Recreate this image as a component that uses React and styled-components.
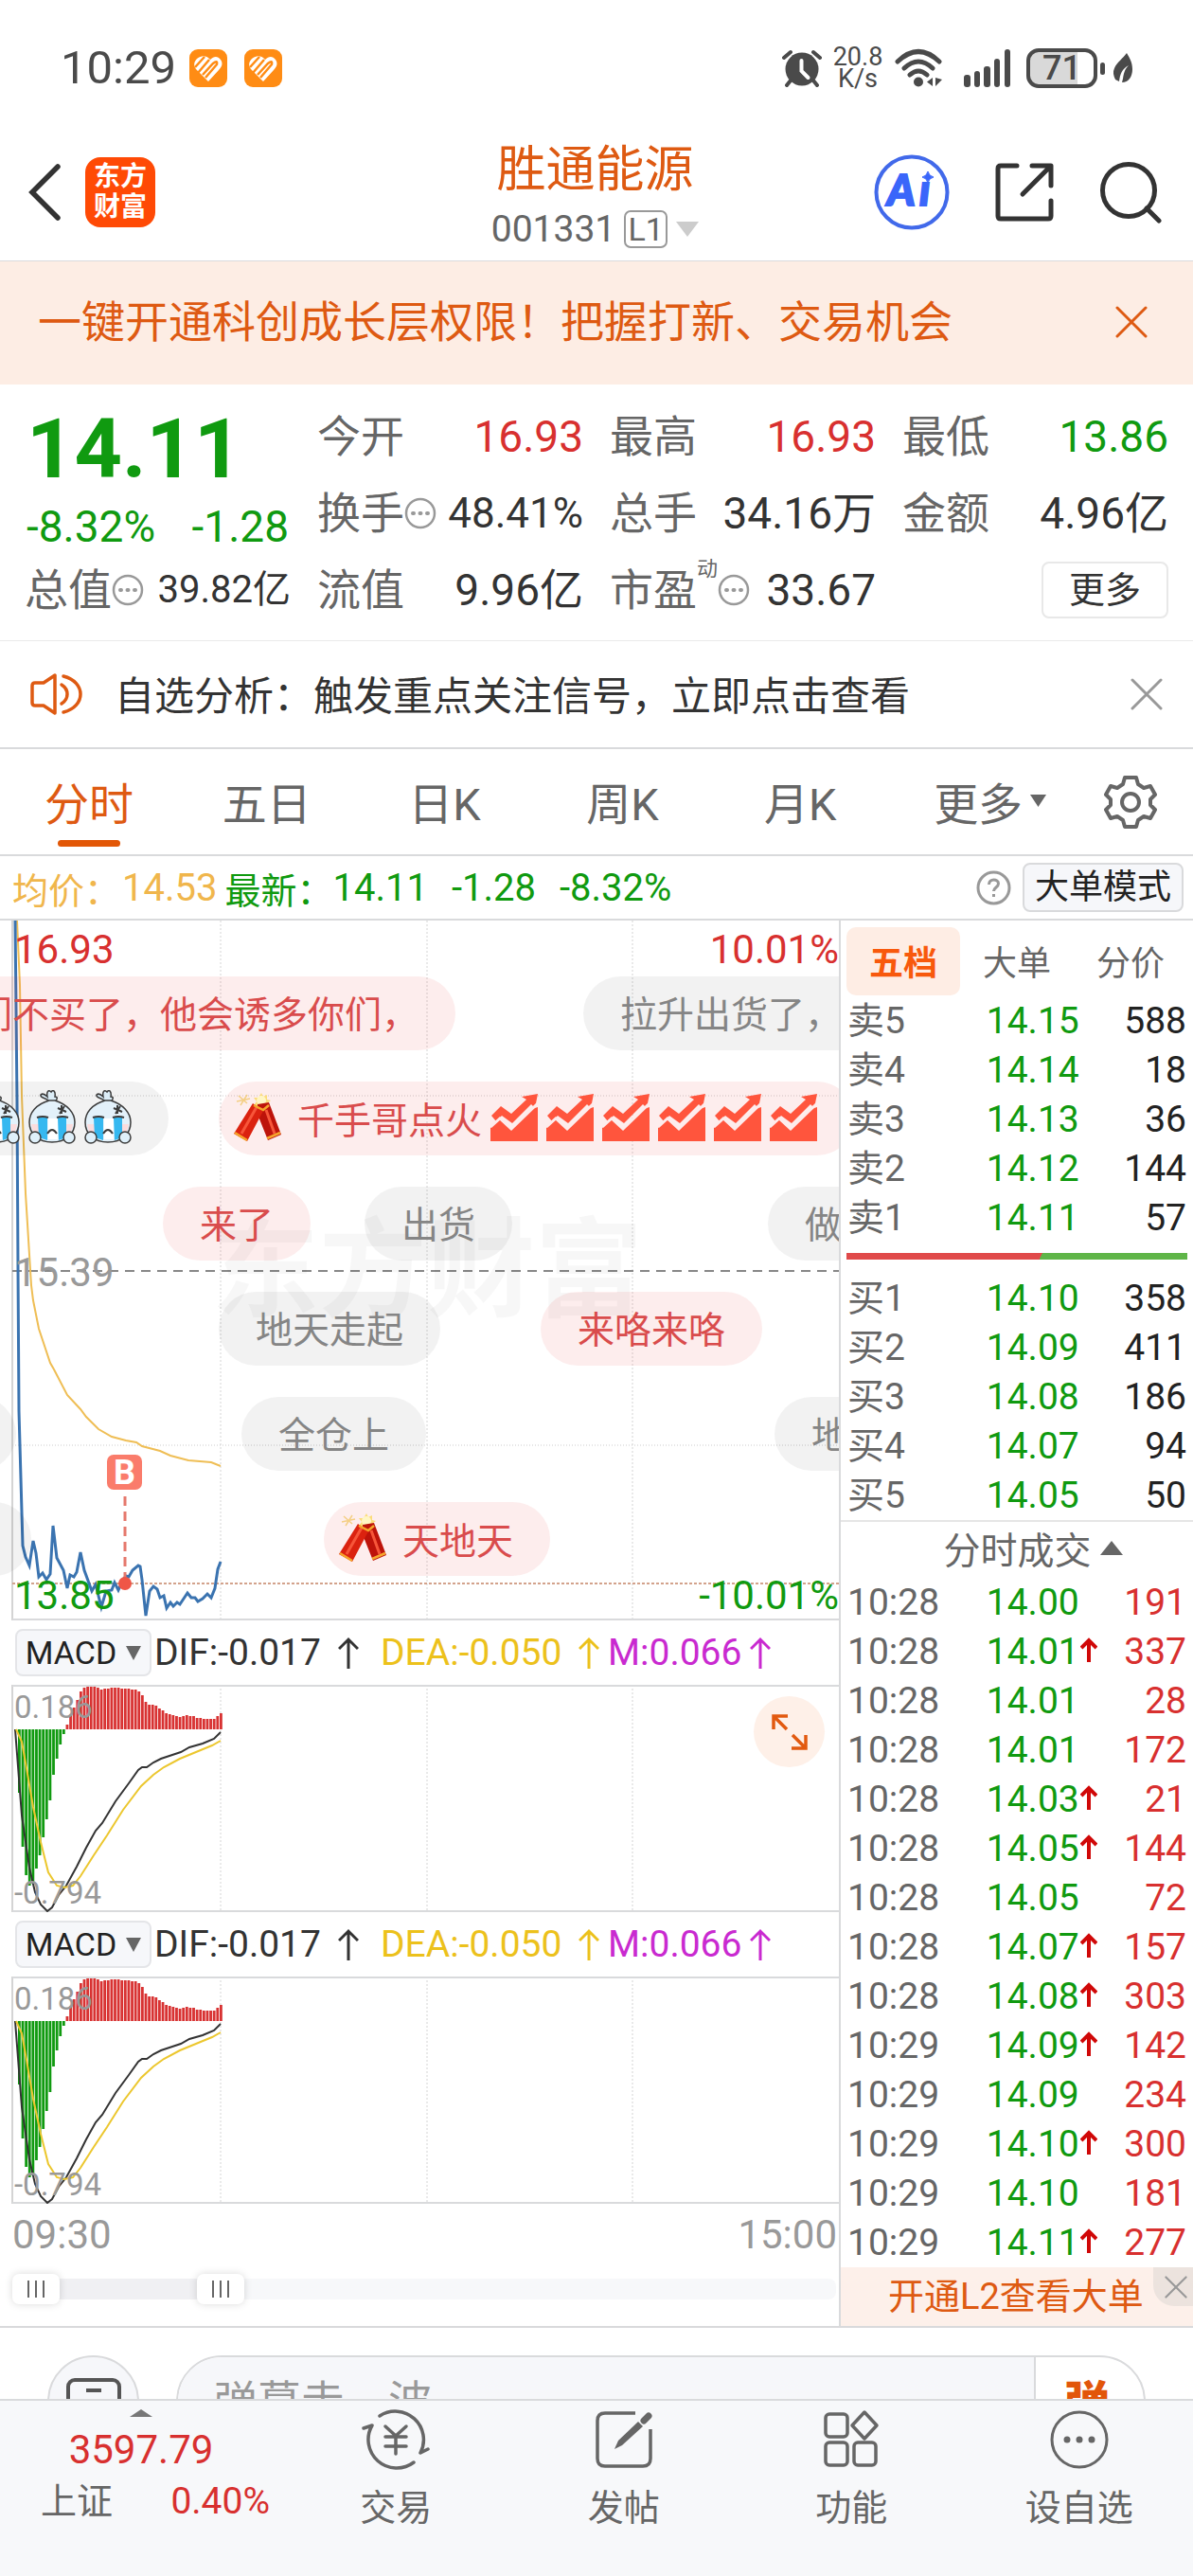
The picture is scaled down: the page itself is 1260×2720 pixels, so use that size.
import React, { useState } from "react";
import styled, { createGlobalStyle } from "styled-components";

const GlobalStyle = createGlobalStyle`
  * {
    box-sizing: border-box;
  }

  body {
    margin: 0;
    background: #fff;
    color: #333;
    font-family: Roboto, "Noto Sans CJK SC", sans-serif;
    font-size: 38px;
  }

  button {
    padding: 0;
    border: none;
    background: none;
    color: inherit;
    font: inherit;
    cursor: pointer;
  }

  svg {
    display: block;
    flex: none;
  }
`;

const colors = {
  accent: "#de5a12",
  up: "#d8302f",
  down: "#109a10",
  text: "#333",
  label: "#666",
  muted: "#999",
  line: "#d9dadc",
  average: "#f0b64c",
};

// Page Layout
const Page = styled.div`
  display: flex;
  flex-direction: column;
  height: 100vh;
`;

const Content = styled.main`
  flex: 1;
  min-height: 0;
  overflow-y: auto;
  scrollbar-width: none;
`;

// Status Bar
const StatusBar = styled.div`
  display: flex;
  align-items: center;
  height: 144px;
  padding: 0 64px;
  color: #4a4a4a;
`;

const Clock = styled.span`
  margin-right: 14px;
  font-size: 49px;
  line-height: 56px;
`;

const AppBadges = styled.div`
  display: flex;
  flex: 1;
  gap: 18px;
`;

const StatusIcons = styled.div`
  display: flex;
  align-items: center;
`;

const NetSpeed = styled.span`
  width: 54px;
  margin: 0 12px 0 11px;
  font-size: 27px;
  line-height: 23px;
  text-align: center;
`;

const Signal = styled.span`
  margin-left: 23px;
`;

const Battery = styled.span`
  width: 75px;
  height: 42px;
  margin: 0 3px 0 16px;
  border: 4px solid #4a4a4a;
  border-radius: 13px;
  background: linear-gradient(90deg, #d9d9d9 74%, #fff 74%);
  font-size: 36px;
  font-weight: 500;
  line-height: 35px;
  text-align: center;
`;

// Header
const Header = styled.header`
  display: grid;
  grid-template-columns: 1fr auto 1fr;
  align-items: center;
  height: 132px;
  padding: 0 33px 0 30px;
  border-bottom: 1px solid ${colors.line};
`;

const HeaderSide = styled.div`
  display: flex;
  align-items: center;
  justify-content: ${(props) => (props.$end ? "flex-end" : "flex-start")};
  gap: ${(props) => (props.$end ? "48px" : "26px")};
  padding-bottom: 14px;
`;

const Logo = styled.div`
  display: flex;
  align-items: center;
  justify-content: center;
  width: 74px;
  height: 74px;
  border-radius: 16px;
  background: #ff4a05;
  color: #fff;
  font-size: 28px;
  font-weight: 700;
  line-height: 32px;
  text-align: center;
`;

const Heading = styled.div`
  display: flex;
  flex-direction: column;
  align-items: center;
`;

const StockName = styled.h1`
  margin: 0;
  color: ${colors.accent};
  font-size: 52px;
  font-weight: 400;
  line-height: 64px;
`;

const StockCode = styled.button`
  display: flex;
  align-items: center;
  gap: 9px;
  color: ${colors.label};
  font-size: 39px;
  line-height: 60px;
`;

const LevelTag = styled.span`
  width: 46px;
  height: 40px;
  border: 2px solid #999;
  border-radius: 7px;
  font-size: 34px;
  line-height: 37px;
  text-align: center;
`;

// Banner
const Banner = styled.div`
  display: flex;
  align-items: center;
  justify-content: space-between;
  height: 130px;
  padding: 0 48px 2px 40px;
  background: #fdede4;
  color: ${colors.accent};
  font-size: 46px;
  line-height: 64px;
`;

// Quote
const Quote = styled.section`
  display: grid;
  grid-template-columns: repeat(4, minmax(0, 1fr));
  column-gap: 28px;
  padding: 14px 26px 13px;
  border-bottom: 1px solid #eaeaea;
`;

const QuoteColumn = styled.div`
  display: grid;
  grid-template-rows: repeat(3, 81px);
`;

const PriceBlock = styled.div`
  grid-row: span 2;
  display: flex;
  flex-direction: column;
  padding: 0 2px;
  color: ${colors.down};
`;

const Price = styled.strong`
  font-size: 88px;
  line-height: 108px;
`;

const Change = styled.div`
  display: flex;
  justify-content: space-between;
  font-size: 46px;
  line-height: 56px;
`;

const Stat = styled.div`
  display: flex;
  align-items: center;
  font-size: 46px;
  line-height: 56px;
`;

const StatLabel = styled.span`
  color: ${colors.label};
`;

const StatMark = styled.sup`
  align-self: flex-start;
  margin-top: 6px;
  color: ${colors.label};
  font-size: 22px;
  line-height: 26px;
`;

const StatValue = styled.span`
  flex: 1;
  color: ${(props) => props.$color || colors.text};
  font-size: ${(props) => props.$size || 46}px;
  text-align: right;
  white-space: nowrap;
`;

const MoreButton = styled.button`
  width: 134px;
  height: 60px;
  margin-left: auto;
  border: 2px solid #e8e8e8;
  border-radius: 8px;
  font-size: 38px;
  line-height: 50px;
`;

// Notice
const Notice = styled.div`
  display: flex;
  align-items: center;
  height: 114px;
  padding: 0 32px;
  border-bottom: 2px solid ${colors.line};
  font-size: 42px;
`;

const NoticeText = styled.a`
  flex: 1;
  margin-left: 32px;
  padding-bottom: 4px;
  color: ${colors.text};
  text-decoration: none;
`;

// Period Tabs
const PeriodTabs = styled.nav`
  display: flex;
  align-items: stretch;
  height: 113px;
  padding-right: 38px;
  border-bottom: 2px solid ${colors.line};
`;

const PeriodTab = styled.button`
  position: relative;
  display: flex;
  flex: ${(props) => (props.$wide ? "213" : "188")};
  align-items: center;
  justify-content: center;
  gap: 8px;
  padding-bottom: 3px;
  color: ${(props) => (props.$active ? colors.accent : colors.label)};
  font-size: 47px;

  &::after {
    content: "";
    position: absolute;
    bottom: 8px;
    width: 66px;
    height: 7px;
    border-radius: 4px;
    background: ${(props) => (props.$active ? "#e25706" : "transparent")};
  }
`;

const SettingsButton = styled.button`
  margin-left: 14px;
`;

// Average Price Row
const InfoRow = styled.div`
  display: flex;
  align-items: center;
  height: 68px;
  padding: 0 10px 0 13px;
  border-bottom: 2px solid ${colors.line};
  color: ${(props) => props.$color};
  font-size: 38px;
  white-space: nowrap;
`;

const Average = styled.span`
  display: flex;
  align-items: center;
  margin-right: 8px;
  color: ${colors.average};
`;

const AverageValue = styled.span`
  margin-left: 2px;
  font-size: 40px;
`;

const Changes = styled.span`
  display: flex;
  flex: 1;
  gap: 25px;
  font-size: 40px;
`;

const ModeButton = styled.button`
  width: 170px;
  height: 52px;
  margin-left: 12px;
  border: 2px solid ${colors.line};
  border-radius: 8px;
  background: #f6f7fa;
  color: #222;
  font-size: 36px;
  line-height: 46px;
`;

// Market Area
const Market = styled.section`
  display: grid;
  grid-template-columns: minmax(0, 1fr) 374px;
  border-bottom: 2px solid ${colors.line};
`;

const Charts = styled.div`
  min-width: 0;
`;

const Plot = styled.div`
  position: relative;
  height: ${(props) => props.$height}px;
  overflow: hidden;

  > svg {
    width: 100%;
    height: 100%;
  }
`;

const Watermark = styled.span`
  position: absolute;
  top: 300px;
  left: 0;
  width: 100%;
  padding-left: 16px;
  color: rgba(0, 0, 0, 0.03);
  font-size: 114px;
  font-weight: 700;
  line-height: 140px;
  text-align: center;
`;

const AxisLabel = styled.span`
  position: absolute;
  top: ${(props) => props.$top}px;
  ${(props) => (props.$right ? "right: 0" : "left: 15px")};
  color: ${(props) => props.$color || colors.muted};
  font-size: ${(props) => (props.$small ? "33px" : "42px")};
  line-height: 40px;
`;

const Comment = styled.div`
  position: absolute;
  top: ${(props) => 59 + props.$row * 111}px;
  left: ${(props) => props.$left}px;
  display: flex;
  align-items: center;
  gap: 9px;
  height: 78px;
  padding: ${(props) => (props.$icon ? "0 39px 3px 16px" : "0 39px 5px")};
  border-radius: 39px;
  background: ${(props) =>
    props.$hot ? "rgba(235, 50, 50, 0.09)" : "rgba(0, 0, 0, 0.05)"};
  color: ${(props) => (props.$hot ? "#d94c4c" : "#858585")};
  font-size: 39px;
  white-space: nowrap;
`;

const CommentText = styled.span`
  margin-left: 8px;
`;

const BuyMark = styled.span`
  position: absolute;
  top: 564px;
  left: 113px;
  width: 37px;
  height: 37px;
  border-radius: 7px;
  background: #fa7c6b;
  color: #fff;
  font-size: 36px;
  font-weight: 700;
  line-height: 39px;
  text-align: center;
`;

const IndicatorRow = styled.div`
  display: flex;
  align-items: center;
  height: 68px;
  padding-left: 16px;
  font-size: 39px;
  white-space: nowrap;
`;

const IndicatorButton = styled.button`
  display: flex;
  align-items: center;
  justify-content: center;
  gap: 10px;
  width: 144px;
  height: 50px;
  margin-right: 3px;
  border: 2px solid #e4e5e8;
  border-radius: 8px;
  background: #f6f7fa;
  color: #222;
  font-size: 34px;
`;

const IndicatorValue = styled.span`
  display: flex;
  align-items: center;
  justify-content: space-between;
  width: ${(props) => props.$width}px;
  margin-right: ${(props) => props.$gap || 0}px;
  color: ${(props) => props.$color};
`;

const ExpandButton = styled.button`
  position: absolute;
  top: 12px;
  right: 15px;
  display: flex;
  align-items: center;
  justify-content: center;
  width: 75px;
  height: 75px;
  border-radius: 50%;
  background: #fef0e8;
`;

const TimeAxis = styled.div`
  display: flex;
  justify-content: space-between;
  padding: 0 2px 0 13px;
  color: ${colors.muted};
  font-size: 42px;
  line-height: 66px;
`;

const RangeSlider = styled.div`
  display: grid;
  align-items: center;
  height: 48px;
  margin: 0 3px 0 13px;
`;

const Track = styled.div`
  grid-area: 1 / 1;
  height: 22px;
  border-radius: 8px;
  background: linear-gradient(90deg, #f0f0f3 25%, #f7f8fa 25%);
`;

const Range = styled.input`
  grid-area: 1 / 1;
  width: 100%;
  height: 32px;
  margin: 0;
  appearance: none;
  background: none;
  pointer-events: none;

  &::-webkit-slider-thumb {
    appearance: none;
    width: 50px;
    height: 32px;
    border-radius: 7px;
    background:
      linear-gradient(#666, #666) 16px 7px / 2px 18px no-repeat,
      linear-gradient(#666, #666) 24px 7px / 2px 18px no-repeat,
      linear-gradient(#666, #666) 32px 7px / 2px 18px no-repeat,
      #fff;
    box-shadow: 0 0 8px rgba(0, 0, 0, 0.15);
    pointer-events: auto;
  }
`;

// Order Book
const SidePanel = styled.aside`
  display: flex;
  flex-direction: column;
  border-left: 2px solid ${colors.line};
`;

const BookTabs = styled.div`
  display: grid;
  grid-template-columns: repeat(3, 1fr);
  padding: 7px 6px 1px;
`;

const BookTab = styled.button`
  height: 72px;
  padding-bottom: 2px;
  border-radius: 10px;
  background: ${(props) => (props.$active ? "#feede4" : "none")};
  color: ${(props) => (props.$active ? "#f8590c" : colors.label)};
  font-size: 36px;
  font-weight: ${(props) => (props.$active ? 700 : 400)};
`;

const BookTable = styled.table`
  width: calc(100% - 14px);
  margin: 0 7px;
  border-collapse: collapse;
  table-layout: fixed;
  font-size: 39px;
  line-height: 52px;
`;

const Cell = styled.td`
  width: ${(props) => props.$width || "auto"};
  padding: 0;
  color: ${(props) => props.$color};
  text-align: ${(props) => (props.$right ? "right" : "left")};
  white-space: nowrap;

  svg {
    display: inline;
    margin-left: 1px;
    vertical-align: 2px;
  }
`;

const RatioBar = styled.div`
  height: 7px;
  margin: 11px 6px 15px;
  background: linear-gradient(115deg, #e04a4a 57%, #5fb548 57%);
`;

const TicksToggle = styled.button`
  display: flex;
  align-items: center;
  justify-content: center;
  gap: 9px;
  height: 61px;
  padding: 0 0 5px 34px;
  border-top: 2px solid #e6e6e6;
  color: ${colors.label};
  font-size: 39px;
`;

const LevelTwo = styled.div`
  display: flex;
  align-items: flex-start;
  background: #fdf0ea;
  color: ${colors.accent};
`;

const LevelTwoLink = styled.a`
  flex: 1;
  padding-left: 50px;
  color: inherit;
  font-size: 38px;
  line-height: 62px;
  text-decoration: none;
  white-space: nowrap;
`;

const LevelTwoClose = styled.button`
  display: flex;
  align-items: center;
  justify-content: center;
  width: 42px;
  height: 41px;
  padding-left: 6px;
  border-bottom-left-radius: 22px;
  background: #ece3de;
`;

// Comment Box
const Compose = styled.form`
  display: flex;
  gap: 39px;
  padding: 29px 50px 24px;
`;

const RoundButton = styled.button`
  display: flex;
  flex: none;
  align-items: center;
  justify-content: center;
  width: 97px;
  height: 97px;
  border: 2px solid ${colors.line};
  border-radius: 50%;
  background: #f6f7fa;
`;

const ComposeBox = styled.div`
  display: flex;
  flex: 1;
  height: 97px;
  border: 2px solid ${colors.line};
  border-radius: 49px;
  overflow: hidden;
`;

const ComposeInput = styled.input`
  flex: 1;
  min-width: 0;
  padding: 0 38px;
  border: none;
  border-right: 2px solid ${colors.line};
  outline: none;
  background: #f6f7fa;
  font: inherit;
  font-size: 46px;

  &::placeholder {
    color: ${colors.muted};
  }
`;

const SendButton = styled.button`
  width: 114px;
  padding: 0 6px 6px 0;
  color: #e2560a;
  font-size: 48px;
  font-weight: 900;
`;

// Bottom Bar
const BottomBar = styled.nav`
  display: grid;
  grid-template-columns: 298px repeat(4, minmax(0, 1fr));
  height: 187px;
  border-top: 2px solid ${colors.line};
  background: #f7f8fa;
`;

const IndexButton = styled.button`
  display: flex;
  flex-direction: column;
  align-items: center;
  padding-top: 9px;
  color: ${colors.up};
  font-size: 42px;

  > svg {
    margin-bottom: 8px;
  }
`;

const IndexValue = styled.span`
  line-height: 54px;
`;

const IndexRow = styled.span`
  display: flex;
  align-items: center;
  justify-content: space-between;
  width: 242px;
  margin-left: 30px;
  font-size: 39px;
  line-height: 54px;
`;

const IndexName = styled.span`
  color: ${colors.label};
  font-size: 38px;
`;

const NavButton = styled.button`
  display: flex;
  flex-direction: column;
  align-items: center;
  padding-top: 5px;
  color: ${colors.label};
  font-size: 38px;
  line-height: 56px;

  > svg {
    margin-bottom: 8px;
  }
`;

// Icons
const Cross = ({ size, color, stroke = 3 }) => (
  <svg width={size} height={size} viewBox="0 0 34 34" fill="none" stroke={color} strokeWidth={stroke} strokeLinecap="round">
    <path d="M2 2l30 30M32 2L2 32" />
  </svg>
);

const Triangle = ({ width, height, color, up }) => (
  <svg width={width} height={height} viewBox="0 0 10 10" preserveAspectRatio="none" fill={color}>
    <path d={up ? "M0 10L5 0l5 10z" : "M0 0h10L5 10z"} />
  </svg>
);

const DotsCircle = () => (
  <svg width="34" height="34" viewBox="0 0 34 34" fill="none" stroke="#999" strokeWidth="2.500">
    <circle cx="17" cy="17" r="15" />
    <path d="M9 17h1M16.500 17h1M24 17h1" strokeWidth="4" strokeLinecap="round" />
  </svg>
);

const BadgeIcon = () => (
  <svg width="40" height="40" viewBox="0 0 40 40">
    <rect width="40" height="40" rx="9" fill="#ff8c14" />
    <path d="M8 10c5-4 9-3 12-1l2 2c4-4 8-4 11 0 3 4 1 8-2 11L20 34 7 21c-3-4-2-8 1-11z" fill="#fff" />
    <path d="M6 19L16 8M9 25l12-14M14 27l11-12q5-4 4 1L17 30" stroke="#ff8c14" strokeWidth="2.500" fill="none" />
  </svg>
);

const AlarmIcon = () => (
  <svg width="42" height="40" viewBox="0 0 42 40" fill="#4a4a4a">
    <circle cx="21" cy="21" r="17.500" />
    <path d="M9 33l-4 5M33 33l4 5" stroke="#4a4a4a" strokeWidth="4" strokeLinecap="round" />
    <path d="M2 9l7-6M40 9l-7-6" stroke="#4a4a4a" strokeWidth="4" strokeLinecap="round" />
    <path d="M20.500 12v11l7 7" stroke="#fff" strokeWidth="4" strokeLinecap="round" fill="none" />
  </svg>
);

const WifiIcon = () => (
  <svg width="50" height="42" viewBox="0 0 50 42" fill="none" stroke="#4a4a4a" strokeWidth="5" strokeLinecap="round">
    <path d="M3 14Q25-7 47 14M10 21q15-14 30 0M16 28q9-8 18 0" />
    <circle cx="25" cy="35.500" r="5" fill="#4a4a4a" stroke="none" />
    <path d="M40 31v9l-6-4.500zM43 31v9l7-7z" fill="#4a4a4a" stroke="none" />
  </svg>
);

const SignalIcon = () => (
  <svg width="50" height="40" viewBox="0 0 50 40" fill="#4a4a4a">
    <rect x="0" y="27" width="7" height="13" rx="3" />
    <rect x="11" y="23" width="6" height="17" rx="3" />
    <rect x="21" y="18" width="7" height="22" rx="3" />
    <rect x="32" y="10" width="6" height="30" rx="3" />
    <rect x="43" y="0" width="6" height="40" rx="3" />
  </svg>
);

const PowerIcon = () => (
  <svg width="34" height="34" viewBox="0 0 34 34" fill="#4a4a4a">
    <rect x="0" y="11" width="5" height="13" rx="2.500" />
    <path d="M28 1c3 5 6 10 6 17 0 8-4 14-11 14l1-4c1-6 2-10 6-14-7 4-9 9-10 17l-4-2c-2-4-3-8-1-12 3-7 9-10 13-16z" />
  </svg>
);

const BackIcon = () => (
  <svg width="34" height="60" viewBox="0 0 34 60" fill="none" stroke="#333" strokeWidth="5.500" strokeLinecap="round">
    <path d="M31 3L4 30l27 27" />
  </svg>
);

const AiIcon = () => (
  <svg width="80" height="80" viewBox="0 0 80 80">
    <circle cx="40" cy="40" r="37.500" fill="none" stroke="#4169ea" strokeWidth="4" />
    <text x="14 48" y="54" fill="#3a66fa" stroke="#3a66fa" strokeWidth="2" fontFamily="Lato" fontWeight="900" fontStyle="italic" fontSize="45">
      Aı
    </text>
    <path d="M57 18q1 5 6 6-5 1-6 6-1-5-6-6 5-1 6-6z" fill="#3a66fa" stroke="#3a66fa" />
  </svg>
);

const ShareIcon = () => (
  <svg width="62" height="62" viewBox="0 0 62 62" fill="none" stroke="#333" strokeWidth="5" strokeLinecap="round" strokeLinejoin="round">
    <path d="M23 3H6Q3 3 3 6v50q0 3 3 3h50q3 0 3-3V40M39 3h20v21M58 4L29 33" />
  </svg>
);

const SearchIcon = () => (
  <svg width="66" height="66" viewBox="0 0 66 66" fill="none" stroke="#333" strokeWidth="5" strokeLinecap="round">
    <circle cx="31" cy="31" r="27.500" />
    <path d="M50 50l13 13" />
  </svg>
);

const SpeakerIcon = () => (
  <svg width="57" height="46" viewBox="0 0 57 46" fill="none" stroke={colors.accent} strokeWidth="3.500" strokeLinecap="round" strokeLinejoin="round">
    <path d="M26 3v40L14 35H5q-3 0-3-3V14q0-3 3-3h9z" />
    <path d="M33 13c8 5 8 15 0 20M35 4c24 6 24 32 0 38" />
  </svg>
);

const GearIcon = () => (
  <svg width="56" height="58" viewBox="0 0 56 58" fill="none" stroke={colors.label} strokeWidth="4" strokeLinejoin="round">
    <path d="M22 3h12l2 7 6 4 7-2 5 9-5 5v6l5 5-5 9-7-2-6 4-2 7H22l-2-7-6-4-7 2-5-9 5-5v-6l-5-5 5-9 7 2 6-4z" />
    <circle cx="28" cy="29" r="9" />
  </svg>
);

const HelpIcon = () => (
  <svg width="37" height="37" viewBox="0 0 37 37" fill="none" stroke="#999" strokeWidth="3">
    <circle cx="18.500" cy="18.500" r="16.500" />
    <path d="M13.500 15c0-7 10-6 10-1 0 4-5 4-5 8M18.500 25v3" />
  </svg>
);

const ArrowUp = ({ color }) => (
  <svg width="22" height="34" viewBox="0 0 22 34" fill="none" stroke={color} strokeWidth="3">
    <path d="M11 34V3M1 13L11 3l10 10" />
  </svg>
);

const TickArrow = () => (
  <svg width="18" height="26" viewBox="0 0 18 26" fill="none" stroke="#d00808" strokeWidth="4">
    <path d="M9 26V4M1 11l8-8 8 8" />
  </svg>
);

const CryingFace = () => (
  <svg width="50" height="58" viewBox="0 0 50 58" stroke="#3c3c3c" strokeWidth="1.500">
    <path d="M22 12C18 7 12 9 13 5c2-2 5 0 7 2-1-5 1-8 4-5 2-3 5-1 4 5 3 0 3 2 0 6" fill="#dcedf7" />
    <path d="M22 11C8 15 1 24 1 34c0 12 9 21 24 21s24-9 24-21c0-10-8-19-21-23z" fill="#e3f1fa" />
    <path d="M3 36h8v14C6 48 4 42 3 36zM47 36h-8v14c5-2 7-8 8-14z" fill="#fbdcdd" stroke="none" />
    <path d="M21 30h10v22H21z" fill="#fff" stroke="none" />
    <path d="M10 29h10v24l-9-3zM31 29h9v21l-8 3z" fill="#35b8f0" stroke="none" />
    <path d="M9 29q6-2 12 0M30 29q6-2 12 0M20 46q5-8 10 0M31 19l9 4M38 17l-5 8M35 16v9" fill="none" strokeWidth="2" />
    <circle cx="7" cy="50" r="6" fill="#dff0fa" />
    <circle cx="43" cy="50" r="6" fill="#dff0fa" />
  </svg>
);

const Firecracker = () => (
  <svg width="50" height="52" viewBox="0 0 50 52">
    <path d="M29 0l2 4 4-2v5l4 1-4 3 1 5-5-2-3 4-2-5-5 0 3-4-3-4h5z" fill="#fbdc7a" />
    <circle cx="29" cy="8" r="5" fill="#fff6c4" />
    <path d="M5 3l9 8M14 2l-7 11M3 9l14-3" stroke="#f4cf85" strokeWidth="1.500" />
    <path d="M25 12l12-2 13 34-14 6-12-30z" fill="#bd130a" />
    <path d="M20 11l11 8-17 32L0 43z" fill="#db220f" />
    <path d="M24 15L8 43M34 18l9 25" stroke="#f7563a" strokeWidth="3" />
    <path d="M1 42l13 8M21 13l10 5 6-5M35 48l14-6" stroke="#f5a62c" strokeWidth="2.500" fill="none" />
  </svg>
);

const ChartEmoji = () => (
  <svg width="50" height="50" viewBox="0 0 50 50" fill="#ff553d">
    <path d="M1 23l10-10 11 8L38 6l-5-3L50 0l-3 15-4-4-20 20-11-8-6 6z" />
    <path d="M0 36l10-9 12 11L44 16l6-2v36H0z" />
    <path d="M0 35l10-9 12 11 27-26" fill="none" stroke="#fdecec" strokeWidth="3" />
  </svg>
);

const ExpandIcon = () => (
  <svg width="38" height="38" viewBox="0 0 38 38" fill="none" stroke="#e25a10" strokeWidth="3.500">
    <path d="M16 16L2 2M17 2H2v14M22 22l14 14M21 36h15V22" />
  </svg>
);

const KeyboardIcon = () => (
  <svg width="58" height="50" viewBox="0 0 58 50" fill="none" stroke="#555" strokeWidth="4">
    <rect x="2" y="2" width="54" height="46" rx="7" />
    <path d="M21 13h16M16 34h26" />
  </svg>
);

const TradeIcon = () => (
  <svg width="72" height="72" viewBox="0 0 72 72" fill="none" stroke={colors.label} strokeWidth="3.500" strokeLinecap="round" strokeLinejoin="round">
    <path d="M19 11A30 30 0 0 1 62 50l8-4M55 60A30 30 0 0 1 11 21l-9 3" />
    <path d="M25 22l11 10 11-10M25 33h22M25 43h22M36 33v18" />
  </svg>
);

const PostIcon = () => (
  <svg width="72" height="72" viewBox="0 0 72 72" fill="none" stroke={colors.label} strokeWidth="3.500">
    <path d="M48 8H16q-8 0-8 8v40q0 8 8 8h40q8 0 8-8V25" />
    <path d="M62 11l-5 5" strokeWidth="7" strokeLinecap="round" />
    <path d="M51 17l5 5-22 20-8 4 4-9z" fill={colors.label} stroke="none" />
  </svg>
);

const FeaturesIcon = () => (
  <svg width="72" height="72" viewBox="0 0 72 72" fill="none" stroke={colors.label} strokeWidth="3.500" strokeLinejoin="round">
    <rect x="9" y="9" width="23" height="24" rx="4" />
    <path d="M50 7l13 14-13 14-13-14z" />
    <rect x="9" y="39" width="23" height="24" rx="4" />
    <rect x="39" y="39" width="23" height="24" rx="4" />
  </svg>
);

const WatchIcon = () => (
  <svg width="72" height="72" viewBox="0 0 72 72" fill="none" stroke={colors.label} strokeWidth="3">
    <circle cx="36" cy="36" r="29" />
    <path d="M23 36h0M36 36h0M49 36h0" strokeWidth="7" strokeLinecap="round" />
  </svg>
);

// Data
const statColumns = [
  [
    { label: "今开", value: "16.93", color: colors.up },
    { label: "换手", value: "48.41%", info: true, size: 48 },
    { label: "流值", value: "9.96亿" },
  ],
  [
    { label: "最高", value: "16.93", color: colors.up },
    { label: "总手", value: "34.16万" },
    { label: "市盈", value: "33.67", mark: "动", info: true },
  ],
  [
    { label: "最低", value: "13.86", color: colors.down },
    { label: "金额", value: "4.96亿" },
  ],
];

const periods = ["分时", "五日", "日K", "周K", "月K"];

const asks = [
  ["卖5", "14.15", 588],
  ["卖4", "14.14", 18],
  ["卖3", "14.13", 36],
  ["卖2", "14.12", 144],
  ["卖1", "14.11", 57],
];

const bids = [
  ["买1", "14.10", 358],
  ["买2", "14.09", 411],
  ["买3", "14.08", 186],
  ["买4", "14.07", 94],
  ["买5", "14.05", 50],
];

const ticks = [
  ["10:28", "14.00", 191],
  ["10:28", "14.01", 337, true],
  ["10:28", "14.01", 28],
  ["10:28", "14.01", 172],
  ["10:28", "14.03", 21, true],
  ["10:28", "14.05", 144, true],
  ["10:28", "14.05", 72],
  ["10:28", "14.07", 157, true],
  ["10:28", "14.08", 303, true],
  ["10:29", "14.09", 142, true],
  ["10:29", "14.09", 234],
  ["10:29", "14.10", 300, true],
  ["10:29", "14.10", 181],
  ["10:29", "14.11", 277, true],
];

const comments = [
  { row: 0, left: -65, hot: true, text: "们不买了，他会诱多你们，" },
  { row: 0, left: 616, text: "拉升出货了，" },
  { row: 2, left: 172, hot: true, text: "来了" },
  { row: 2, left: 385, text: "出货" },
  { row: 2, left: 811, text: "做" },
  { row: 3, left: 231, text: "地天走起" },
  { row: 3, left: 571, hot: true, text: "来咯来咯" },
  { row: 4, left: -61, text: "" },
  { row: 4, left: 255, text: "全仓上" },
  { row: 4, left: 818, text: "地" },
  { row: 5, left: -45, text: "" },
];

const priceLine =
  "16,0 18,190 19,368 20,518 24,660 27,672 31,681 35,655 38,668 41,693 45,689 49,696 53,690 56,639 60,673 67,686 71,705 74,691 78,693 81,688 85,667 89,686 97,708 101,701 107,725 112,708 118,707 121,699 125,707 130,696 133,692 136,693 140,686 146,681 148,682 150,696 154,734 158,708 162,703 166,706 169,715 173,713 176,726 180,720 183,724 187,720 190,722 198,710 202,715 206,715 209,719 214,716 219,711 223,715 227,705 230,685 233,677";

const averageLine =
  "18,0 21,68 23,185 27,288 33,385 35,401 41,431 53,467 57,474 71,501 85,516 91,524 104,537 118,545 133,549 144,551 150,555 169,560 180,565 199,570 223,572 233,576";

const difLine =
  "16,47 23,138 31,193 37,219 43,232 50,239 55,235 62,222 70,212 81,192 91,172 101,154 108,146 122,123 136,104 146,90 150,87 155,87 162,82 170,78 182,74 191,71 200,66 214,62 226,57 233,50";

const deaLine =
  "17,47 23,60 28,88 35,129 43,166 51,198 60,212 68,214 77,212 85,202 99,180 113,159 130,132 149,107 162,95 173,87 190,78 207,71 224,64 233,59";

const macdBars = [
  -2, -67, -124, -154, -165, -163, -147, -133, -114, -95, -75, -48, -31, -16, -5,
  5, 16, 23, 31, 40, 44, 45, 45, 45, 44, 42, 43, 43, 44, 44, 44, 43, 43, 43, 42,
  42, 40, 36, 29, 26, 26, 25, 22, 20, 17, 16, 15, 14, 13, 14, 15, 14, 14, 12, 12,
  11, 11, 11, 11, 14, 17,
];

const Grid = ({ height }) => (
  <g fill="none" stroke="#d4d4d4">
    <path d={`M13 0V${height}`} strokeWidth="2" />
    <path d={`M233 0V${height}M451 0V${height}M668 0V${height}`} strokeDasharray="2 2" />
  </g>
);

const PriceChart = () => (
  <Plot $height={739}>
    <Watermark>东方财富</Watermark>
    <svg viewBox="0 0 886 739" preserveAspectRatio="none" fill="none">
      <Grid height={739} />
      <path d="M13 185H886M13 554H886" stroke="#ccc" strokeDasharray="1 2" />
      <path d="M13 370H886" stroke="#888" strokeWidth="2" strokeDasharray="10 7" />
      <path d="M13 700H886" stroke="#d3a28c" strokeWidth="2" strokeDasharray="3 2" />
      <path d="M13 738H886" stroke={colors.line} strokeWidth="2" />
      <polyline points={averageLine} stroke="#efbe55" strokeWidth="2" />
      <polyline points={priceLine} stroke="#3a73b0" strokeWidth="3" />
      <path d="M132 608V694" stroke="#e5786c" strokeWidth="3" strokeDasharray="10 6" />
      <circle cx="132" cy="700" r="7" fill="#ef5647" />
    </svg>
    {comments.map((item) => (
      <Comment key={`${item.row}-${item.left}`} $row={item.row} $left={item.left} $hot={item.hot}>
        {item.text}
      </Comment>
    ))}
    <Comment $row={1} $left={-45} $icon>
      <CryingFace />
      <CryingFace />
      <CryingFace />
    </Comment>
    <Comment $row={1} $left={231} $hot $icon>
      <Firecracker />
      <CommentText>千手哥点火</CommentText>
      {[1, 2, 3, 4, 5, 6].map((n) => (
        <ChartEmoji key={n} />
      ))}
    </Comment>
    <Comment $row={5} $left={342} $hot $icon>
      <Firecracker />
      <CommentText>天地天</CommentText>
    </Comment>
    <BuyMark>B</BuyMark>
    <AxisLabel $top={11} $color={colors.up}>16.93</AxisLabel>
    <AxisLabel $top={11} $color={colors.up} $right>10.01%</AxisLabel>
    <AxisLabel $top={352}>15.39</AxisLabel>
    <AxisLabel $top={693} $color={colors.down}>13.85</AxisLabel>
    <AxisLabel $top={693} $color={colors.down} $right>-10.01%</AxisLabel>
  </Plot>
);

const MacdChart = ({ expandable }) => (
  <>
    <IndicatorRow>
      <IndicatorButton type="button">
        MACD
        <Triangle width={16} height={15} color="#666" />
      </IndicatorButton>
      <IndicatorValue $width={216} $gap={23} $color="#333">
        DIF:-0.017
        <ArrowUp color="#333" />
      </IndicatorValue>
      <IndicatorValue $width={231} $gap={9} $color="#ecc11c">
        DEA:-0.050
        <ArrowUp color="#ecc11c" />
      </IndicatorValue>
      <IndicatorValue $width={172} $color="#c92ad0">
        M:0.066
        <ArrowUp color="#c92ad0" />
      </IndicatorValue>
    </IndicatorRow>
    <Plot $height={240}>
      <svg viewBox="0 0 886 240" preserveAspectRatio="none" fill="none">
        <Grid height={240} />
        <path d="M13 1H886M13 239H886" stroke={colors.line} strokeWidth="2" />
        {macdBars.map((bar, i) => (
          <rect
            key={i}
            x={15.4 + i * 3.61}
            y={bar > 0 ? 47 - bar : 47}
            width="2.8"
            height={Math.abs(bar)}
            fill={bar > 0 ? "#d83232" : "#109a10"}
          />
        ))}
        <polyline points={difLine} stroke="#333" strokeWidth="2" />
        <polyline points={deaLine} stroke="#ecc72e" strokeWidth="2" />
      </svg>
      <AxisLabel $top={4} $small>0.186</AxisLabel>
      <AxisLabel $top={200} $small>-0.794</AxisLabel>
      {expandable && (
        <ExpandButton type="button" aria-label="放大">
          <ExpandIcon />
        </ExpandButton>
      )}
    </Plot>
  </>
);

const BookRows = ({ rows }) => (
  <BookTable>
    <tbody>
      {rows.map(([name, price, amount]) => (
        <tr key={name}>
          <Cell $width="41%" $color={colors.label}>{name}</Cell>
          <Cell $width="33%" $color={colors.down}>{price}</Cell>
          <Cell $color="#222" $right>{amount}</Cell>
        </tr>
      ))}
    </tbody>
  </BookTable>
);

const App = () => {
  const [period, setPeriod] = useState("分时");
  const [bookTab, setBookTab] = useState("五档");
  const [range, setRange] = useState({ from: 0, to: 238 });

  return (
    <Page>
      <GlobalStyle />
      <Content>
        <StatusBar>
          <Clock>10:29</Clock>
          <AppBadges>
            <BadgeIcon />
            <BadgeIcon />
          </AppBadges>
          <StatusIcons>
            <AlarmIcon />
            <NetSpeed>
              20.8
              <br />
              K/s
            </NetSpeed>
            <WifiIcon />
            <Signal>
              <SignalIcon />
            </Signal>
            <Battery>71</Battery>
            <PowerIcon />
          </StatusIcons>
        </StatusBar>

        <Header>
          <HeaderSide>
            <button type="button" aria-label="返回">
              <BackIcon />
            </button>
            <Logo>
              东方
              <br />
              财富
            </Logo>
          </HeaderSide>
          <Heading>
            <StockName>胜通能源</StockName>
            <StockCode type="button">
              001331
              <LevelTag>L1</LevelTag>
              <Triangle width={24} height={16} color="#ccc" />
            </StockCode>
          </Heading>
          <HeaderSide $end>
            <button type="button">
              <AiIcon />
            </button>
            <button type="button" aria-label="分享">
              <ShareIcon />
            </button>
            <button type="button" aria-label="搜索">
              <SearchIcon />
            </button>
          </HeaderSide>
        </Header>

        <Banner>
          一键开通科创成长层权限！把握打新、交易机会
          <button type="button" aria-label="关闭">
            <Cross size={34} color={colors.accent} />
          </button>
        </Banner>

        <Quote>
          <QuoteColumn>
            <PriceBlock>
              <Price>14.11</Price>
              <Change>
                <span>-8.32%</span>
                <span>-1.28</span>
              </Change>
            </PriceBlock>
            <Stat>
              <StatLabel>总值</StatLabel>
              <DotsCircle />
              <StatValue $size={40}>39.82亿</StatValue>
            </Stat>
          </QuoteColumn>
          {statColumns.map((column, i) => (
            <QuoteColumn key={i}>
              {column.map((stat) => (
                <Stat key={stat.label}>
                  <StatLabel>{stat.label}</StatLabel>
                  {stat.mark && <StatMark>{stat.mark}</StatMark>}
                  {stat.info && <DotsCircle />}
                  <StatValue $color={stat.color} $size={stat.size && 44}>
                    {stat.value}
                  </StatValue>
                </Stat>
              ))}
              {column.length < 3 && (
                <Stat>
                  <MoreButton type="button">更多</MoreButton>
                </Stat>
              )}
            </QuoteColumn>
          ))}
        </Quote>

        <Notice>
          <SpeakerIcon />
          <NoticeText href="#analysis">自选分析：触发重点关注信号，立即点击查看</NoticeText>
          <button type="button" aria-label="关闭">
            <Cross size={34} color="#999" />
          </button>
        </Notice>

        <PeriodTabs>
          {periods.map((name) => (
            <PeriodTab key={name} type="button" $active={name === period} onClick={() => setPeriod(name)}>
              {name}
            </PeriodTab>
          ))}
          <PeriodTab type="button" $wide>
            更多
            <Triangle width={17} height={13} color="#666" />
          </PeriodTab>
          <SettingsButton type="button" aria-label="设置">
            <GearIcon />
          </SettingsButton>
        </PeriodTabs>

        <InfoRow $color={colors.down}>
          <Average>
            均价：
            <AverageValue>14.53</AverageValue>
          </Average>
          最新：
          <Changes>
            <span>14.11</span>
            <span>-1.28</span>
            <span>-8.32%</span>
          </Changes>
          <HelpIcon />
          <ModeButton type="button">大单模式</ModeButton>
        </InfoRow>

        <Market>
          <Charts>
            <PriceChart />
            <MacdChart expandable />
            <MacdChart />
            <TimeAxis>
              <span>09:30</span>
              <span>15:00</span>
            </TimeAxis>
            <RangeSlider>
              <Track />
              <Range
                type="range"
                aria-label="开始时间"
                max="1000"
                value={range.from}
                onChange={(e) => setRange({ ...range, from: Number(e.target.value) })}
              />
              <Range
                type="range"
                aria-label="结束时间"
                max="1000"
                value={range.to}
                onChange={(e) => setRange({ ...range, to: Number(e.target.value) })}
              />
            </RangeSlider>
          </Charts>

          <SidePanel>
            <BookTabs>
              {["五档", "大单", "分价"].map((name) => (
                <BookTab key={name} type="button" $active={name === bookTab} onClick={() => setBookTab(name)}>
                  {name}
                </BookTab>
              ))}
            </BookTabs>
            <BookRows rows={asks} />
            <RatioBar />
            <BookRows rows={bids} />
            <TicksToggle type="button">
              分时成交
              <Triangle width={24} height={15} color="#666" up />
            </TicksToggle>
            <BookTable>
              <tbody>
                {ticks.map(([time, price, amount, rising], i) => (
                  <tr key={i}>
                    <Cell $width="41%" $color={colors.label}>{time}</Cell>
                    <Cell $width="35%" $color={colors.down}>
                      {price}
                      {rising && <TickArrow />}
                    </Cell>
                    <Cell $color={colors.up} $right>{amount}</Cell>
                  </tr>
                ))}
              </tbody>
            </BookTable>
            <LevelTwo>
              <LevelTwoLink href="#level2">开通L2查看大单</LevelTwoLink>
              <LevelTwoClose type="button" aria-label="关闭">
                <Cross size={24} color="#999" />
              </LevelTwoClose>
            </LevelTwo>
          </SidePanel>
        </Market>

        <Compose onSubmit={(e) => e.preventDefault()}>
          <RoundButton type="button" aria-label="键盘">
            <KeyboardIcon />
          </RoundButton>
          <ComposeBox>
            <ComposeInput type="text" aria-label="弹幕" placeholder="弹幕走一波" />
            <SendButton type="submit">弹</SendButton>
          </ComposeBox>
        </Compose>
      </Content>

      <BottomBar>
        <IndexButton type="button">
          <Triangle width={24} height={8} color="#777" up />
          <IndexValue>3597.79</IndexValue>
          <IndexRow>
            <IndexName>上证</IndexName>
            0.40%
          </IndexRow>
        </IndexButton>
        <NavButton type="button">
          <TradeIcon />
          交易
        </NavButton>
        <NavButton type="button">
          <PostIcon />
          发帖
        </NavButton>
        <NavButton type="button">
          <FeaturesIcon />
          功能
        </NavButton>
        <NavButton type="button">
          <WatchIcon />
          设自选
        </NavButton>
      </BottomBar>
    </Page>
  );
};

export default App;
